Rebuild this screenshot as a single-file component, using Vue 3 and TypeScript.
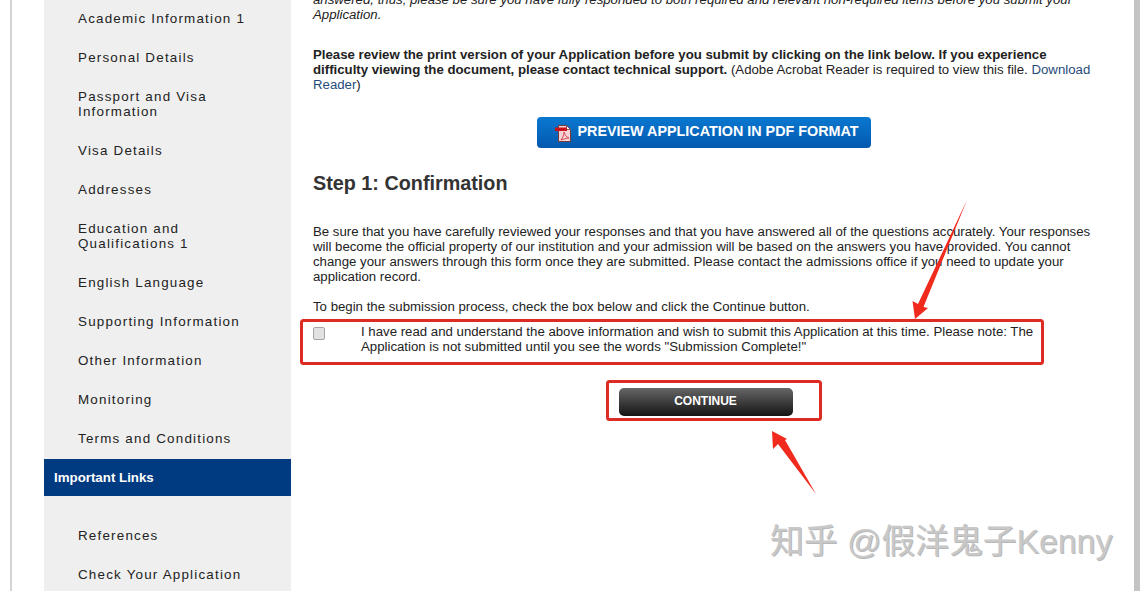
<template>
  <div class="page">
    <div class="frame">
      <nav class="sidebar">
        <a v-for="item in topLinks" :key="item" class="nav-link">{{ item }}</a>
        <div class="nav-title">Important Links</div>
        <div class="nav-lower">
          <a v-for="item in lowerLinks" :key="item" class="nav-link">{{ item }}</a>
        </div>
      </nav>

      <main class="content">
        <p class="intro">
          answered, thus; please be sure you have fully responded to both required and relevant non-required items before you submit your Application.
        </p>
        <p class="review">
          <strong>Please review the print version of your Application before you submit by clicking on the link below. If you experience difficulty viewing the document, please contact technical support.</strong>
          (Adobe Acrobat Reader is required to view this file. <a class="link">Download Reader</a>)
        </p>
        <div class="preview-row">
          <button class="preview-btn">
            <svg class="pdf-icon" width="18" height="19" viewBox="0 0 18 19">
              <path d="M3.5 1.5h8l4 4v12h-12z" fill="#f6d3d6" stroke="#7a3a3a" stroke-width="1" />
              <path d="M11.5 1.5v4h4z" fill="#fff" stroke="#7a3a3a" stroke-width="0.8" />
              <rect x="0" y="3.5" width="12" height="3.5" fill="#c8101a" />
              <path d="M6 16c2-3 3-5 3-8 1 3 2 5 5 6-3 0-5 1-8 2z" fill="none" stroke="#d84a55" stroke-width="1" />
            </svg>
            PREVIEW APPLICATION IN PDF FORMAT
          </button>
        </div>
        <h2 class="step-title">Step 1: Confirmation</h2>
        <p class="terms">
          Be sure that you have carefully reviewed your responses and that you have answered all of the questions accurately. Your responses will become the official property of our institution and your admission will be based on the answers you have provided. You cannot change your answers through this form once they are submitted. Please contact the admissions office if you need to update your application record.
        </p>
        <p class="begin">To begin the submission process, check the box below and click the Continue button.</p>
        <label class="confirm-row">
          <span class="check-cell"><input v-model="agreed" class="check" type="checkbox" /></span>
          <span>I have read and understand the above information and wish to submit this Application at this time. Please note: The Application is not submitted until you see the words "Submission Complete!"</span>
        </label>
        <div class="continue-row">
          <button class="continue-btn">CONTINUE</button>
        </div>
      </main>
    </div>

    <!-- red marks drawn on top of the screenshot -->
    <svg class="marks" width="1140" height="591" viewBox="0 0 1140 591">
      <rect x="301.5" y="320.5" width="741" height="43" rx="2" fill="none" stroke="#dd2c24" stroke-width="3" />
      <rect x="607.5" y="381.5" width="213" height="38" rx="2" fill="none" stroke="#dd2c24" stroke-width="3" />
      <path d="M967 200 L923.5 307 L928 308 L915 319 L912.5 301 L918 304z" fill="#f02a1c" />
      <path d="M816 494 L785 440 L787 439 L772 431 L773 449 L778 444z" fill="#f02a1c" />
    </svg>

    <div class="watermark">知乎 @假洋鬼子Kenny</div>
  </div>
</template>

<script setup lang="ts">
import { ref } from "vue";

const agreed = ref(false);

const topLinks = [
  "Academic Information 1",
  "Personal Details",
  "Passport and Visa Information",
  "Visa Details",
  "Addresses",
  "Education and Qualifications 1",
  "English Language",
  "Supporting Information",
  "Other Information",
  "Monitoring",
  "Terms and Conditions",
];

const lowerLinks = ["References", "Check Your Application"];
</script>

<style>
html,
body {
  margin: 0;
  background: #fff;
  overflow: hidden;
}
</style>

<style scoped>
.page {
  position: relative;
  width: 1140px;
  height: 591px;
  overflow: hidden;
  background: #fff;
  font-family: "Liberation Sans", Arial, sans-serif;
  color: #222;
}

.frame {
  display: flex;
  box-sizing: border-box;
  width: 1130px;
  height: 599px;
  margin: -8px 0 0 10px;
  padding-left: 32px;
  border-left: 2px solid #d4d4d4;
  border-right: 6px solid #c4c4c4;
  background: #fff;
}

.sidebar {
  flex: 0 0 247px;
  padding-top: 7px;
  background: #efefef;
}

.nav-link {
  display: block;
  padding: 12px 40px 12px 34px;
  font-size: 13.4px;
  line-height: 15px;
  letter-spacing: 1.2px;
  color: #222;
}

.nav-title {
  margin-top: 1px;
  padding: 0 10px;
  background: #003a80;
  color: #fff;
  font-size: 13.3px;
  font-weight: 700;
  line-height: 37px;
}

.nav-lower {
  padding-top: 20px;
}

.content {
  flex: 0 0 782px;
  margin-left: 22px;
  font-size: 13.23px;
  line-height: 15px;
}

p {
  margin: 0;
}

.intro {
  font-style: italic;
}

.review {
  margin-top: 25px;
}

.link {
  color: #1f4b7c;
}

.preview-row {
  display: flex;
  justify-content: center;
  margin: 25px 0 0 -1px;
}

.preview-btn {
  display: flex;
  align-items: center;
  gap: 5px;
  box-sizing: border-box;
  width: 334px;
  height: 31px;
  padding: 0 0 2px 18px;
  border: 0;
  border-radius: 4px;
  background: linear-gradient(#0a78d0, #0458ae);
  color: #fff;
  font: 700 14.35px/1 "Liberation Sans", Arial, sans-serif;
}

.pdf-icon {
  margin-top: 4px;
}

.step-title {
  margin: 23px 0 0;
  font-size: 19.8px;
  line-height: 24px;
  font-weight: 700;
  color: #333;
}

.terms {
  margin-top: 29px;
}

.begin {
  margin-top: 15px;
}

.confirm-row {
  display: flex;
  margin-top: 10px;
  width: 730px;
}

.check-cell {
  flex: 0 0 48px;
}

.check {
  appearance: none;
  display: block;
  box-sizing: border-box;
  width: 12px;
  height: 13px;
  margin: 3px 0 0;
  border: 1px solid #a5a5a5;
  border-radius: 2px;
  background: #e2e2e2;
}

.continue-row {
  display: flex;
  justify-content: center;
  margin: 34px 0 0 3px;
}

.continue-btn {
  box-sizing: border-box;
  width: 174px;
  height: 28px;
  padding: 0 0 2px;
  border: 0;
  border-radius: 5px;
  background: linear-gradient(#666, #141414);
  color: #fff;
  font: 700 12px/1 "Liberation Sans", Arial, sans-serif;
}

.marks {
  position: absolute;
  top: 0;
  left: 0;
  pointer-events: none;
}

.watermark {
  position: absolute;
  left: 770px;
  top: 520px;
  font-family: "Liberation Sans", "Noto Sans CJK SC", sans-serif;
  font-size: 33.8px;
  line-height: 42px;
  white-space: nowrap;
  color: #c8c8c8;
  text-shadow: 1px 1px 0 #b8b8b8;
}
</style>
